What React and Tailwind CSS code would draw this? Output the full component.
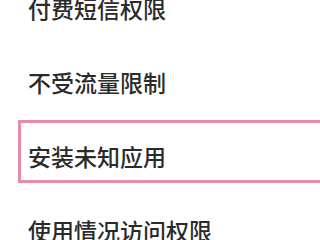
import React from "react";

const items = ["付费短信权限", "不受流量限制", "安装未知应用", "使用情况访问权限"];

const App = () => {
  return (
    <div className="w-[320px] h-[240px] overflow-hidden bg-white">
      <div className="flex flex-col -mt-[29px]">
        {items.map((label, i) => (
          <div key={label} className="relative h-[74px] flex items-center pl-[28px]">
            {i === 2 && (
              <div className="absolute top-[1px] left-[18px] -right-[10px] h-[63px] border-[3px] border-[#e98aaa]" />
            )}
            <span
              className="text-[23px] leading-none font-medium text-[#2b2b2b]"
              style={{ fontFamily: '"Noto Sans CJK SC", sans-serif' }}
            >
              {label}
            </span>
          </div>
        ))}
      </div>
    </div>
  );
};

export default App;
